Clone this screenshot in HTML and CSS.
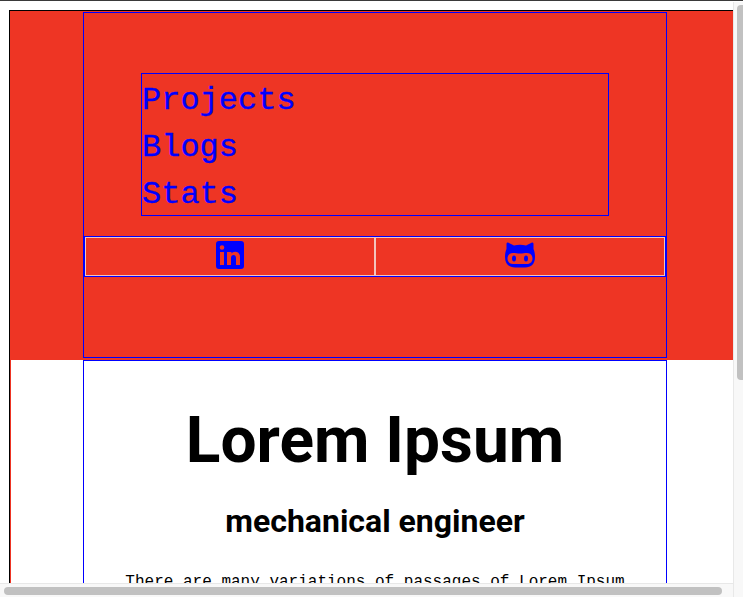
FILE: index.html
```html
<!DOCTYPE html>
<html lang="en">
<head>
    <meta charset="UTF-8">
    <meta name="viewport" content="width=device-width, initial-scale=1.0">
    <title>Lorem Ipsum</title>
    <link rel="stylesheet" href="styles.css">
</head>
<body>
    <div class="page">
        <header class="hero">
            <div class="container hero-inner">
                <nav class="nav">
                    <a href="#">Projects</a>
                    <a href="#">Blogs</a>
                    <a href="#">Stats</a>
                </nav>
                <div class="social">
                    <a href="#" class="social-link" aria-label="LinkedIn">
                        <svg width="28" height="28" viewBox="0 0 28 28">
                            <path fill="#0000ff" fill-rule="evenodd" d="M3 0h22a3 3 0 0 1 3 3v22a3 3 0 0 1-3 3H3a3 3 0 0 1-3-3V3a3 3 0 0 1 3-3zM4 11v13h4V11zM6 4.200a2.300 2.300 0 1 0 0 4.600a2.300 2.300 0 0 0 0-4.600zM11 11v13h4v-7c0-2 1-3 2.500-3s2.500 1 2.500 3v7h4v-8c0-3.500-2-5.300-4.800-5.300c-1.800 0-3.100.8-3.700 1.900V11z"/>
                        </svg>
                    </a>
                    <a href="#" class="social-link" aria-label="GitHub">
                        <svg width="30" height="26" viewBox="0 0 30 26">
                            <path fill="#0000ff" fill-rule="evenodd" d="M3 .5l6 3c2-.5 4-.7 6-.7s4 .2 6 .7l6-3c1 0 1.500.5 1.500 1.500v5c1 2 1.500 5 1.500 8c0 7-4 10.500-10 10.500H10C4 25.500 0 22 0 15c0-3 .5-6 1.500-8V2C1.500 1 2 .5 3 .5zM8 11c-3.500 0-5.500 2.500-5.500 5.500s2 5.500 5.500 5.500h14c3.500 0 5.500-2.500 5.500-5.500s-2-5.500-5.500-5.500c-2.500 0-4.500.5-7 .5s-4.500-.5-7-.5z"/>
                            <ellipse cx="9" cy="16.500" rx="2" ry="3" fill="#0000ff"/>
                            <ellipse cx="21" cy="16.500" rx="2" ry="3" fill="#0000ff"/>
                        </svg>
                    </a>
                </div>
            </div>
        </header>
        <main class="content">
            <div class="container intro">
                <h1>Lorem Ipsum</h1>
                <h2>mechanical engineer</h2>
                <p>There are many variations of passages of Lorem Ipsum available, but the majority have suffered alteration in some form.</p>
            </div>
        </main>
    </div>

    <div class="scroll-v"><div class="thumb-v"></div></div>
    <div class="scroll-h"><div class="thumb-h"></div></div>
</body>
</html>
```

FILE: styles.css
```css
html, body {
    height: 100%;
    overflow: hidden;
}

body {
    margin: 0;
    padding-top: 1px;
    box-sizing: border-box;
    background-color: #fff;
    border-top: 1px solid #3a3a3a;
    font-family: 'Liberation Mono', monospace;
}

.page {
    margin: 8px 10px 0 9px;
    border-left: 1px solid #000;
    border-top: 1px solid #000;
}

.hero {
    background-color: #ee3524;
    padding-top: 1px;
    height: 349px;
    box-sizing: border-box;
}

.container {
    width: 584px;
    margin-left: 73px;
    box-sizing: border-box;
    border: 1px solid #0000ff;
}

.hero-inner {
    height: 346px;
    padding-top: 60px;
}

.nav {
    width: 468px;
    margin: 0 auto;
    height: 143px;
    box-sizing: border-box;
    border: 1px solid #0000ff;
    padding-top: 3px;
    display: flex;
    flex-direction: column;
}

.nav a {
    color: #0000ff;
    text-decoration: none;
    font-size: 32px;
    line-height: 47px;
    -webkit-text-stroke: 0.3px #0000ff;
}

.social {
    display: flex;
    margin-top: 20px;
    height: 41px;
    box-sizing: border-box;
    border: 1px solid #0000ff;
}

.social-link {
    flex: 1;
    display: flex;
    align-items: center;
    justify-content: center;
    border: 1px solid #f3c4bd;
    padding-bottom: 4px;
}

.content {
    border-left: 1px solid #ee3524;
    height: 300px;
}

.intro {
    margin-left: 72px;
    border-bottom: none;
    height: 300px;
    text-align: center;
    padding: 42px 40px 0;
}

h1 {
    font-family: 'Roboto', sans-serif;
    font-weight: 700;
    font-size: 64px;
    line-height: 75px;
    margin: 0;
}

h2 {
    font-family: 'Roboto', sans-serif;
    font-weight: 700;
    font-size: 32px;
    line-height: 38px;
    margin: 24px 0 0;
}

p {
    font-size: 16px;
    line-height: 24px;
    margin: 30px 0 0;
}

/* fake browser scrollbars */
.scroll-v {
    position: fixed;
    top: 2px;
    right: 0;
    bottom: 0;
    width: 10px;
    background-color: #f8f8f8;
    border-left: 1px solid #e8e8e8;
    box-sizing: border-box;
}

.thumb-v {
    margin: 3px 0 0 3px;
    width: 6px;
    height: 375px;
    background-color: #c1c1c1;
    border-radius: 4px 0 0 4px;
}

.scroll-h {
    position: fixed;
    left: 0;
    right: 10px;
    bottom: 0;
    height: 14px;
    background-color: #f8f8f8;
    border-top: 1px solid #e8e8e8;
    box-sizing: border-box;
    padding: 3px 0 0 4px;
}

.thumb-h {
    width: 718px;
    height: 8px;
    background-color: #c1c1c1;
    border-radius: 4px;
}
```
